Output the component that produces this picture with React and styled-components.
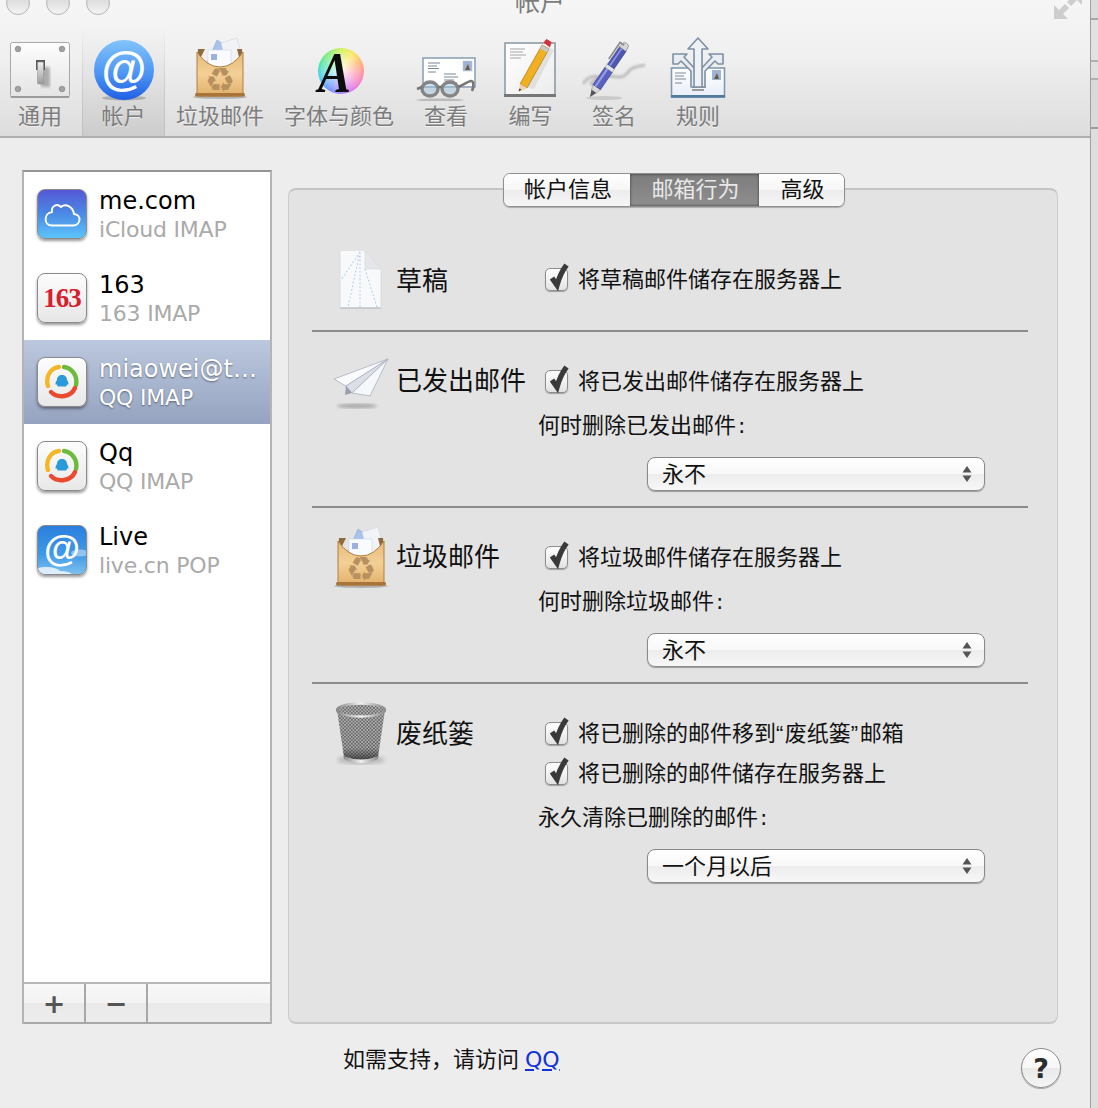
import React from 'react';
import styled, { createGlobalStyle } from 'styled-components';

const Global = createGlobalStyle`
  html, body { margin: 0; padding: 0; background: #dedede; }
  body { font-family: "DejaVu Sans", "Noto Sans CJK SC", sans-serif; }
`;

const Page = styled.div`
  width: 1098px;
  height: 1108px;
  display: flex;
  overflow: hidden;
`;
const Window = styled.div`
  width: 1090px;
  display: flex;
  flex-direction: column;
  background: #ededed;
  border-right: 1px solid #a0a0a0;
  box-sizing: content-box;
`;
const RightStrip = styled.div`
  flex: 1;
  background: linear-gradient(
    #dcdcdc 0 18px, #a8a8a8 18px 20px, #e2e2e2 20px 60px, #b0b0b0 60px 62px,
    #e0e0e0 62px 78px, #b0b0b0 78px 80px, #dadada 80px 127px, #9c9c9c 127px 129px, #dedede 129px
  );
`;

/* toolbar */
const Toolbar = styled.header`
  height: 136px;
  flex: none;
  background: linear-gradient(#f6f6f6, #f0f0f0 40%, #dddddd);
  border-bottom: 2px solid #aeaeae;
`;
const TitleBar = styled.div`
  height: 27px;
  display: grid;
  grid-template-columns: 515px 50px 1fr;
`;
const Lights = styled.div`
  display: flex;
  gap: 16px;
  margin: -9px 0 0 6px;
`;
const Light = styled.span`
  width: 24px;
  height: 24px;
  border-radius: 50%;
  box-sizing: border-box;
  border: 1px solid #b4b4b4;
  background: linear-gradient(#d0d0d0, #f4f4f4);
`;
const Title = styled.div`
  font-size: 25px;
  line-height: 25px;
  margin-top: -10px;
  color: #7d7d7d;
  white-space: nowrap;
`;
const ResizeIcon = styled.svg`
  justify-self: end;
  margin-right: 8px;
`;
const Tabs = styled.nav`
  display: flex;
  height: 109px;
`;
const Tab = styled.div`
  width: ${(p) => p.$w}px;
  flex: none;
  box-sizing: border-box;
  padding: 10px ${(p) => p.$right || 0}px 0 0;
  display: flex;
  flex-direction: column;
  align-items: center;
  ${(p) => p.$active && `
    background: linear-gradient(rgba(0,0,0,0), rgba(0,0,0,.075));
    border-left: 1px solid;
    border-right: 1px solid;
    border-image: linear-gradient(rgba(170,170,170,0), #bdbdbd) 1;
  `}
`;
const TabIcon = styled.div`
  height: 64px;
  display: flex;
  justify-content: center;
`;
const TabLabel = styled.div`
  font-size: 22px;
  line-height: 32px;
  color: #7c7c7c;
  text-shadow: 0 1px 0 rgba(255, 255, 255, .6);
  white-space: nowrap;
`;
const WheelBox = styled.div`
  width: 60px;
  height: 64px;
  position: relative;
`;
const Wheel = styled.div`
  position: absolute;
  left: 9px;
  top: 11px;
  width: 46px;
  height: 46px;
  border-radius: 50%;
  background:
    radial-gradient(circle, rgba(255,255,255,.95), rgba(255,255,255,.3) 60%, rgba(255,255,255,0) 78%),
    conic-gradient(#c8f040, #ffe040, #ff9a60, #ff70a0, #e060e0, #9070ff, #5080ff, #30c0f0, #30e0a0, #70e860, #c8f040);
`;
const WheelLetter = styled.span`
  position: absolute;
  left: 9px;
  top: 4px;
  font: italic bold 58px/64px "Liberation Serif", serif;
  color: #0c0c0c;
  transform: scaleX(.85);
  transform-origin: left center;
`;

/* main area */
const Content = styled.main`
  height: 854px;
  flex: none;
  margin-top: 32px;
  padding: 0 32px 0 22px;
  display: flex;
  gap: 16px;
`;
const Sidebar = styled.aside`
  width: 250px;
  flex: none;
  box-sizing: border-box;
  display: flex;
  flex-direction: column;
  background: #fff;
  border: 2px solid #b4b4b4;
  border-top-color: #949494;
  border-bottom: 0;
`;
const AccountList = styled.ul`
  list-style: none;
  margin: 0;
  padding: 0;
  flex: 1;
`;
const Account = styled.li`
  height: 84px;
  box-sizing: border-box;
  padding: 17px 0 0 13px;
  display: flex;
  gap: 12px;
  background: ${(p) => (p.$active ? 'linear-gradient(#bcc8de, #95a3c0)' : 'transparent')};
`;
const AppIcon = styled.div`
  width: 50px;
  height: 50px;
  flex: none;
  box-sizing: border-box;
  border-radius: 8px;
  border: 1px solid #8a8a8a;
  box-shadow: 0 2px 3px rgba(0, 0, 0, .4);
  background: ${(p) => p.$bg};
  display: flex;
  align-items: center;
  justify-content: center;
  overflow: hidden;
`;
const Badge163 = styled.span`
  font: bold 27px/1 "Liberation Serif", serif;
  color: #d8202c;
  letter-spacing: -1px;
`;
const AccountText = styled.div`
  min-width: 0;
  flex: 1;
  margin-top: -3px;
`;
const AccountName = styled.div`
  font-size: 24px;
  line-height: 30px;
  color: ${(p) => (p.$active ? '#fff' : '#000')};
  text-shadow: ${(p) => (p.$active ? '0 1px 2px rgba(0,0,0,.45)' : 'none')};
  white-space: nowrap;
`;
const AccountType = styled.div`
  font-size: 22px;
  line-height: 28px;
  letter-spacing: -.2px;
  color: ${(p) => (p.$active ? '#fff' : '#aaa')};
  text-shadow: ${(p) => (p.$active ? '0 1px 2px rgba(0,0,0,.45)' : 'none')};
`;
const ListBar = styled.div`
  height: 42px;
  flex: none;
  box-sizing: border-box;
  display: flex;
  border-top: 2px solid #b8b8b8;
  border-bottom: 2px solid #a8a8a8;
  background: linear-gradient(#f8f8f8, #f3f3f3 50%, #eaeaea 50%, #ececec);
`;
const BarButton = styled.div`
  width: 62px;
  box-sizing: border-box;
  border-right: 2px solid #a8a8a8;
  display: flex;
  align-items: center;
  justify-content: center;
  font: bold 27px/1 "DejaVu Sans", sans-serif;
  color: #555;
`;

const Panel = styled.section`
  flex: 1;
  margin-top: 18px;
  position: relative;
  box-sizing: border-box;
  background: #e3e3e3;
  border: 1px solid #cdcdcd;
  border-top: 2px solid #c4c4c4;
  border-bottom: 2px solid #c8c8c8;
  border-radius: 8px;
  padding: 40px 29px 0 23px;
`;
const Segments = styled.div`
  position: absolute;
  top: -17px;
  left: 214px;
  display: flex;
  height: 34px;
  box-sizing: border-box;
  border: 1px solid #8f8f8f;
  border-radius: 7px;
  overflow: hidden;
  box-shadow: 0 1px 1px rgba(0, 0, 0, .25);
`;
const Segment = styled.div`
  width: ${(p) => p.$w}px;
  box-sizing: border-box;
  padding-left: 2px;
  text-align: center;
  font-size: 22px;
  line-height: 32px;
  color: ${(p) => (p.$active ? '#e8e8e8' : '#111')};
  background: ${(p) => (p.$active
    ? 'linear-gradient(#7d7d7d, #8e8e8e)'
    : 'linear-gradient(#fff, #f6f6f6 50%, #ececec 50%, #f6f6f6)')};
  box-shadow: ${(p) => (p.$active ? 'inset 0 0 3px rgba(0,0,0,.6)' : 'none')};
`;
const Group = styled.div`
  display: grid;
  grid-template-columns: 84px 142px 1fr;
  padding: 32px 0 ${(p) => p.$bottom}px;
  & + & { border-top: 2px solid #8c8c8c; }
`;
const GroupIcon = styled.div`
  display: flex;
  justify-content: center;
  padding-left: 13px;
  margin-top: ${(p) => p.$top}px;
  height: 0;
`;
const GroupLabel = styled.div`
  height: 30px;
  font-size: 26px;
  line-height: 34px;
  margin-top: ${(p) => p.$top || 0}px;
  color: #111;
  white-space: nowrap;
`;
const GroupBody = styled.div`
  display: flex;
  flex-direction: column;
`;
const CheckRow = styled.div`
  height: 34px;
  box-sizing: border-box;
  padding: 0 0 4px 7px;
  display: flex;
  align-items: center;
  gap: 10px;
  font-size: 22px;
  color: #111;
  white-space: nowrap;
  margin-top: ${(p) => p.$top || 0}px;
`;
const CheckBox = styled.span`
  position: relative;
  width: 23px;
  height: 23px;
  flex: none;
  box-sizing: border-box;
  margin-top: 4px;
  border: 1px solid #8e8e8e;
  border-radius: 5px;
  background: linear-gradient(#fff, #f2f2f2 50%, #e2e2e2);
  box-shadow: 0 1px 1px rgba(0, 0, 0, .3);
`;
const CheckMark = styled.svg`
  position: absolute;
  left: 2px;
  top: -7px;
`;
const Quote = styled.span`
  font-family: "Liberation Sans", sans-serif;
  letter-spacing: 1.5px;
`;
const FieldLabel = styled.div`
  height: 34px;
  line-height: 36px;
  margin-top: 10px;
  font-size: 22px;
  color: #111;
  white-space: nowrap;
`;
const Colon = styled.span`
  margin-left: 2px;
`;
const Select = styled.div`
  width: 338px;
  height: 34px;
  margin: 15px 0 0 109px;
  box-sizing: border-box;
  padding: 0 12px 4px 14px;
  display: flex;
  align-items: center;
  justify-content: space-between;
  font-size: 22px;
  color: #111;
  border: 1px solid #8a8a8a;
  border-radius: 8px;
  background: linear-gradient(#fff, #f8f8f8 50%, #ececec 50%, #f7f7f7);
  box-shadow: 0 1px 1px rgba(0, 0, 0, .3);
`;
const SelectArrows = styled.svg`
  margin-top: 4px;
`;

/* footer */
const Footer = styled.footer`
  flex: 1;
  display: flex;
  padding: 0 29px 0 343px;
`;
const Support = styled.div`
  font-size: 22px;
  line-height: 30px;
  margin-top: 21px;
  color: #111;
  white-space: nowrap;
`;
const SupportLink = styled.a`
  color: #1232d6;
  text-decoration: underline;
  margin-left: 6px;
`;
const HelpButton = styled.div`
  width: 40px;
  height: 40px;
  margin: 24px 0 0 auto;
  box-sizing: border-box;
  border-radius: 50%;
  border: 1px solid #8c8c8c;
  background: linear-gradient(#fff, #f6f6f6 50%, #e9e9e9 50%, #f5f5f5);
  box-shadow: 0 1px 1px rgba(0, 0, 0, .3);
  display: flex;
  align-items: center;
  justify-content: center;
  font: bold 27px/1 "DejaVu Sans", sans-serif;
  color: #2c2c2c;
`;

/* drawings */
const SwitchIcon = () => (
  <svg width="60" height="64" viewBox="0 0 60 64">
    <defs>
      <linearGradient id="plate" x1="0" y1="0" x2="0" y2="1">
        <stop offset="0" stopColor="#fdfdfd" />
        <stop offset="1" stopColor="#e4e4e4" />
      </linearGradient>
      <linearGradient id="lever" x1="0" y1="0" x2="0" y2="1">
        <stop offset="0" stopColor="#f2f2f2" />
        <stop offset="1" stopColor="#9a9a9a" />
      </linearGradient>
      <filter id="soft"><feGaussianBlur stdDeviation="1.6" /></filter>
    </defs>
    <rect x="0.5" y="5.5" width="59" height="55" rx="2" fill="url(#plate)" stroke="#a8a8a8" />
    <rect x="1" y="59" width="58" height="2" fill="#9b9b9b" />
    {[[8, 12], [52, 12], [8, 52], [52, 52]].map(([x, y]) => (
      <circle key={x + '-' + y} cx={x} cy={y} r="2.8" fill="#a2a2a2" stroke="#777" strokeWidth=".6" />
    ))}
    <rect x="31" y="30" width="9" height="20" fill="#777" opacity=".55" filter="url(#soft)" />
    <rect x="26" y="23" width="9" height="10" fill="#5a5a5a" />
    <rect x="27.5" y="25" width="6" height="22" rx="1" fill="url(#lever)" stroke="#888" strokeWidth=".5" />
  </svg>
);

const AtIcon = () => (
  <svg width="60" height="64" viewBox="0 0 60 64">
    <defs>
      <linearGradient id="atBall" x1="0" y1="0" x2="0" y2="1">
        <stop offset="0" stopColor="#82c4fb" />
        <stop offset=".55" stopColor="#4d96f4" />
        <stop offset="1" stopColor="#2060e6" />
      </linearGradient>
    </defs>
    <ellipse cx="30" cy="61" rx="22" ry="2.5" fill="#000" opacity=".2" />
    <circle cx="30" cy="33" r="30" fill="url(#atBall)" />
    <text x="30" y="48" textAnchor="middle" fontFamily="Liberation Sans" fontSize="46" fontWeight="700" fill="#fff">@</text>
  </svg>
);

const BagIcon = ({ w = 54, h = 64 }) => (
  <svg width={w} height={h} viewBox="0 0 54 64">
    <defs>
      <linearGradient id="bag" x1="0" y1="0" x2="0" y2="1">
        <stop offset="0" stopColor="#e6ba78" />
        <stop offset=".5" stopColor="#f3d096" />
        <stop offset="1" stopColor="#e2b06a" />
      </linearGradient>
    </defs>
    <ellipse cx="27" cy="60" rx="27" ry="2" fill="#000" opacity=".22" />
    <path d="M14 26 L24 3 L40 14 V30 Z" fill="#a9c2ea" stroke="#8aa6d8" strokeWidth=".6" />
    <path d="M28 6 L44 1 L50 24 L34 28 Z" fill="#f2f3f6" stroke="#cfd3dc" strokeWidth=".6" />
    <rect x="15" y="13" width="23" height="17" fill="#fafbfe" stroke="#cdd3e4" strokeWidth=".6" />
    <rect x="18" y="17" width="6" height="6" fill="#9cb1e0" />
    <path d="M5 12 Q4 18 8 20 L12 12 Z M49 12 Q50 18 46 20 L44 12 Z" fill="#8f6a3c" />
    <path d="M4 15 Q14 30 27 30 Q40 30 50 15 L50 56 Q50 59 47 59 H7 Q4 59 4 56 Z" fill="url(#bag)" stroke="#b07e3a" />
    <rect x="2" y="56" width="50" height="3.5" rx="1.5" fill="#a9743a" />
    <text x="27" y="55" textAnchor="middle" fontFamily="DejaVu Sans" fontSize="34" fill="#b89060">♻</text>
  </svg>
);

const ColorIcon = () => (
  <WheelBox>
    <Wheel />
    <WheelLetter>A</WheelLetter>
  </WheelBox>
);

const LetterLines = () => (
  <g stroke="#5a6b80" strokeWidth=".8">
    <path d="M5 5h12M5 8h9M5 10.5h11M5 14h8" />
    <path d="M21 16h12M21 19h14M21 22h10M21 25h13" />
  </g>
);

const GlassesIcon = () => (
  <svg width="64" height="64" viewBox="0 0 64 64">
    <g transform="translate(9 21)">
      <rect x="0" y="0" width="52" height="29" fill="#fff" stroke="#8ea4b8" strokeWidth="1.6" />
      <LetterLines />
      <rect x="40" y="3" width="9" height="10" fill="#9fb3d4" stroke="#c0c8d4" strokeWidth=".6" />
      <path d="M42 12l3-6 2 6z" fill="#6b5a40" />
    </g>
    <ellipse cx="26" cy="63" rx="24" ry="1.5" fill="#000" opacity=".18" />
    <g fill="rgba(150,190,220,.45)" stroke="#858585" strokeWidth="3.4">
      <ellipse cx="16" cy="52" rx="8" ry="7" />
      <ellipse cx="36" cy="52" rx="8" ry="7" />
    </g>
    <path d="M24 50h4M8 50l-5 2M44 50c6-2 10-6 13-6s3 6 1 10" fill="none" stroke="#777" strokeWidth="2.6" />
  </svg>
);

const PencilIcon = () => (
  <svg width="54" height="64" viewBox="0 0 54 64">
    <defs>
      <linearGradient id="sheet" x1="0" y1="0" x2="1" y2="1">
        <stop offset="0" stopColor="#fff" />
        <stop offset="1" stopColor="#ececec" />
      </linearGradient>
    </defs>
    <rect x="1" y="6" width="50" height="53" fill="url(#sheet)" stroke="#8b9ca6" strokeWidth="1.6" />
    <rect x="0" y="57" width="52" height="3" fill="#777" />
    <path d="M6 12h15M6 15h13M6 18h16M6 21h11" stroke="#9a9a9a" strokeWidth=".9" />
    <path d="M21 50L30 52 50 13 40 8Z" fill="#000" opacity=".08" />
    <path d="M16 47L38 8l7 4-22 39z" fill="#f0b020" stroke="#a87814" strokeWidth=".7" />
    <path d="M38 8l7 4-2 3.5-7-4z" fill="#c8c8c8" />
    <path d="M39.5 5.5l3-3.5 5 3-1.5 5.5z" fill="#d8303a" />
    <path d="M16 47l7 4-6 3.5-2.5-.5z" fill="#f0d4b0" />
    <path d="M15.5 51.5l2 1-3 2z" fill="#333" />
  </svg>
);

const PenIcon = () => (
  <svg width="64" height="64" viewBox="0 0 64 64">
    <defs><filter id="penBlur"><feGaussianBlur stdDeviation=".8" /></filter></defs>
    <path d="M1 47c5-8 14-10 16-5s-6 8-8 4c6-6 18-8 26-6 8 1 10-4 14-8 3-2 8-3 14-4" fill="none" stroke="#aaa" strokeWidth="3" opacity=".7" filter="url(#penBlur)" />
    <ellipse cx="22" cy="61" rx="18" ry="2" fill="#000" opacity=".12" />
    <g transform="translate(8 60) rotate(34.4)">
      <path d="M0 0L3 -7H-3Z" fill="#555" />
      <path d="M-3 -7H3L4.5 -12H-4.5Z" fill="#d8d8dc" stroke="#777" strokeWidth=".4" />
      <rect x="-4.5" y="-33" width="9" height="21" fill="#5a62c0" stroke="#3c4290" strokeWidth=".6" />
      <rect x="-2.5" y="-33" width="2" height="21" fill="#9aa0e4" />
      <rect x="-4.5" y="-37" width="9" height="4" fill="#e4e4e8" stroke="#888" strokeWidth=".4" />
      <rect x="-4" y="-58" width="8" height="21" fill="#4e56b0" stroke="#3c4290" strokeWidth=".6" />
      <rect x="-2.2" y="-58" width="1.8" height="21" fill="#8c92da" />
      <path d="M-4 -58H4L3 -64Q0 -66 -3 -64Z" fill="#d8d8de" stroke="#666" strokeWidth=".5" />
      <path d="M-1 -62H-6V-42" fill="none" stroke="#8a8a8a" strokeWidth="1.6" />
    </g>
  </svg>
);

const RulesIcon = () => (
  <svg width="56" height="64" viewBox="0 0 56 64">
    <defs>
      <linearGradient id="ruleMail" x1="0" y1="0" x2="0" y2="1">
        <stop offset="0" stopColor="#fff" />
        <stop offset="1" stopColor="#e8eef8" />
      </linearGradient>
    </defs>
    <rect x="1.5" y="31" width="53" height="29" fill="url(#ruleMail)" stroke="#7f9ab2" strokeWidth="1.6" />
    <rect x="1" y="58" width="54" height="2.6" fill="#4f7ba0" />
    <path d="M5 36h11M5 39h9M5 42h11M5 46h7" stroke="#5a6b80" strokeWidth=".8" />
    <path d="M22 50h14M22 53h12" stroke="#444" strokeWidth="1" />
    <rect x="42" y="33" width="9" height="10" fill="#9fb3d4" />
    <path d="M44 42l3-6 2 6z" fill="#6b5a40" />
    <g fill="#eef1f5" stroke="#7d90a4" strokeWidth="1.6" strokeLinejoin="round">
      <path d="M3 17 H17 L14 20 L25 32 V50 H21 V34 L11 24 L8 27 H3 Z" fill="#e9edf2" />
      <path d="M53 17 H39 L42 20 L31 32 V50 H35 V34 L45 24 L48 27 H53 Z" fill="#e9edf2" />
      <path d="M28 1 L38 12 H32 V50 H24 V12 H18 Z" />
    </g>
  </svg>
);

const CloudIcon = () => (
  <svg width="38" height="26" viewBox="0 0 38 26">
    <path d="M9 24.5h21c8 0 9-11 1-11.5C30 6 23 2 18 6 14 2 8 5 9 11 .5 12 .5 24.5 9 24.5z" fill="none" stroke="#fff" strokeWidth="1.9" />
  </svg>
);

const QqIcon = () => (
  <svg width="36" height="36" viewBox="0 0 36 36">
    <path d="M20 3C28 4 34 12 32 21" fill="none" stroke="#6cbb3c" strokeWidth="4.4" strokeLinecap="round" />
    <path d="M31 24C27 33 14 35 7 28" fill="none" stroke="#ea4b30" strokeWidth="4.4" strokeLinecap="round" />
    <path d="M4 22C1 12 7 4 15 3" fill="none" stroke="#f5b72a" strokeWidth="4.4" strokeLinecap="round" />
    <path d="M18 11c3 0 5 2 5 5 1.500 2 2 4 1 5l-1-1c0 1.500-.5 2-1 2.500h-8c-.5-.5-1-1-1-2.500l-1 1c-1-1-.5-3 1-5 0-3 2-5 5-5z" fill="#2a9ad8" />
  </svg>
);

const LiveIcon = () => (
  <svg width="48" height="48" viewBox="0 0 48 48">
    <g fill="#fff" opacity=".75">
      <ellipse cx="8" cy="46" rx="14" ry="5" />
      <ellipse cx="22" cy="49" rx="12" ry="4" />
    </g>
    <ellipse cx="42" cy="27" rx="9" ry="3.5" fill="#8fc5ef" />
    <text x="24" y="35" textAnchor="middle" fontFamily="Liberation Sans" fontSize="37" fontWeight="700" fill="#fff">@</text>
  </svg>
);

const DraftIcon = () => (
  <svg width="44" height="60" viewBox="0 0 44 60">
    <path d="M1 1H26L42 19V58H1Z" fill="#f8f9fb" />
    <path d="M26 1L42 19H26Z" fill="#e4e6ea" stroke="#d4d6da" strokeWidth=".6" />
    <path d="M21 2L2 30M21 2L9 57M21 2V57M26 19L38 57" stroke="#bcd0ee" strokeWidth="1.2" strokeDasharray="1.8 2" fill="none" />
    <path d="M1 58H42" stroke="#c0c0c0" strokeWidth="1.4" />
    <path d="M1 1V58M42 19V58" stroke="#d8d8d8" strokeWidth=".8" />
  </svg>
);

const PlaneIcon = () => (
  <svg width="58" height="54" viewBox="0 0 58 54">
    <defs><filter id="planeBlur"><feGaussianBlur stdDeviation="1.4" /></filter></defs>
    <ellipse cx="25" cy="48" rx="20" ry="2.5" fill="#777" opacity=".5" filter="url(#planeBlur)" />
    <path d="M2 21L56 1L14 28Z" fill="#fbfbfd" stroke="#aab0c0" strokeWidth=".8" />
    <path d="M56 1L14 28L20 35Z" fill="#dcdfe8" stroke="#aab0c0" strokeWidth=".8" />
    <path d="M56 1L20 35L38 38Z" fill="#f6f7fa" stroke="#aab0c0" strokeWidth=".8" />
    <path d="M14 28L20 35L13 37Z" fill="#9aa0ae" />
  </svg>
);

const TrashIcon = () => (
  <svg width="54" height="64" viewBox="0 0 54 64">
    <defs>
      <pattern id="mesh" width="3.4" height="3.4" patternUnits="userSpaceOnUse">
        <rect width="3.4" height="3.4" fill="#b4b4b4" />
        <circle cx=".85" cy=".85" r=".75" fill="#444" />
        <circle cx="2.55" cy="2.55" r=".75" fill="#444" />
      </pattern>
      <linearGradient id="rim" x1="0" y1="0" x2="1" y2="0">
        <stop offset="0" stopColor="#8a8a8a" />
        <stop offset=".5" stopColor="#f0f0f0" />
        <stop offset="1" stopColor="#8a8a8a" />
      </linearGradient>
      <linearGradient id="depth" x1="0" y1="0" x2="0" y2="1">
        <stop offset="0" stopColor="#000" stopOpacity="0" />
        <stop offset=".75" stopColor="#000" stopOpacity=".05" />
        <stop offset="1" stopColor="#000" stopOpacity=".55" />
      </linearGradient>
      <filter id="trashBlur"><feGaussianBlur stdDeviation="2" /></filter>
    </defs>
    <ellipse cx="27" cy="58" rx="24" ry="4" fill="#000" opacity=".2" filter="url(#trashBlur)" />
    <path d="M3 8L10 55Q27 62 44 55L51 8Z" fill="url(#mesh)" />
    <path d="M3 8L10 55Q27 62 44 55L51 8Z" fill="url(#depth)" />
    <ellipse cx="27" cy="8" rx="24" ry="6.5" fill="url(#mesh)" stroke="url(#rim)" strokeWidth="2.4" />
    <path d="M9.500 54Q27 61 44.500 54L44 57Q27 65 10 57Z" fill="url(#rim)" />
  </svg>
);

const Check = ({ children, top }) => (
  <CheckRow $top={top}>
    <CheckBox>
      <CheckMark width="22" height="30" viewBox="0 0 22 30">
        <path d="M4 16l5 7C11 16 14 9 18.500 3" fill="none" stroke="#3a3a3a" strokeWidth="5.4" />
      </CheckMark>
    </CheckBox>
    <span>{children}</span>
  </CheckRow>
);

const Popup = ({ value }) => (
  <Select>
    {value}
    <SelectArrows width="10" height="16" viewBox="0 0 10 16">
      <path d="M5 0l4.500 6.500h-9zM5 16L.5 9.500h9z" fill="#555" />
    </SelectArrows>
  </Select>
);

const toolbarTabs = [
  { label: '通用', w: 82, right: 2, icon: <SwitchIcon /> },
  { label: '帐户', w: 83, icon: <AtIcon />, active: true },
  { label: '垃圾邮件', w: 110, icon: <BagIcon /> },
  { label: '字体与颜色', w: 128, icon: <ColorIcon /> },
  { label: '查看', w: 86, icon: <GlassesIcon /> },
  { label: '编写', w: 83, icon: <PencilIcon /> },
  { label: '签名', w: 84, icon: <PenIcon /> },
  { label: '规则', w: 84, icon: <RulesIcon /> },
];

const accounts = [
  { name: 'me.com', type: 'iCloud IMAP', bg: 'linear-gradient(#5558d6, #4a8ae4 50%, #5cc4fc)', icon: <CloudIcon /> },
  { name: '163', type: '163 IMAP', bg: 'linear-gradient(#fdfdfd, #e6e6e6)', icon: <Badge163>163</Badge163> },
  { name: 'miaowei@t…', type: 'QQ IMAP', bg: 'linear-gradient(#fdfdfd, #e8e8e8)', icon: <QqIcon />, active: true },
  { name: 'Qq', type: 'QQ IMAP', bg: 'linear-gradient(#fdfdfd, #e8e8e8)', icon: <QqIcon /> },
  { name: 'Live', type: 'live.cn POP', bg: 'linear-gradient(#2a7fdc, #3f9ae8 60%, #7cc0ee)', icon: <LiveIcon /> },
];

const App = () => (
  <Page>
    <Global />
    <Window>
      <Toolbar>
        <TitleBar>
          <Lights>
            <Light />
            <Light />
            <Light />
          </Lights>
          <Title>帐户</Title>
          <ResizeIcon width="30" height="20" viewBox="0 0 30 20">
            <path d="M2 5V19H16L11 14L17 8L13 4L7 10ZM30 5V-9H16L21 -4L15 2L19 6L25 0Z" fill="#cdcdcd" />
          </ResizeIcon>
        </TitleBar>
        <Tabs>
          {toolbarTabs.map((t) => (
            <Tab key={t.label} $w={t.w} $right={t.right} $active={t.active}>
              <TabIcon>{t.icon}</TabIcon>
              <TabLabel>{t.label}</TabLabel>
            </Tab>
          ))}
        </Tabs>
      </Toolbar>

      <Content>
        <Sidebar>
          <AccountList>
            {accounts.map((a) => (
              <Account key={a.name} $active={a.active}>
                <AppIcon $bg={a.bg}>{a.icon}</AppIcon>
                <AccountText>
                  <AccountName $active={a.active}>{a.name}</AccountName>
                  <AccountType $active={a.active}>{a.type}</AccountType>
                </AccountText>
              </Account>
            ))}
          </AccountList>
          <ListBar>
            <BarButton>+</BarButton>
            <BarButton>−</BarButton>
          </ListBar>
        </Sidebar>

        <Panel>
          <Segments>
            <Segment $w={126}>帐户信息</Segment>
            <Segment $w={129} $active>邮箱行为</Segment>
            <Segment $w={85}>高级</Segment>
          </Segments>

          <Group $bottom={34}>
            <GroupIcon $top={-12}><DraftIcon /></GroupIcon>
            <GroupLabel $top={2}>草稿</GroupLabel>
            <GroupBody>
              <Check>将草稿邮件储存在服务器上</Check>
            </GroupBody>
          </Group>

          <Group $bottom={15}>
            <GroupIcon $top={-6}><PlaneIcon /></GroupIcon>
            <GroupLabel>已发出邮件</GroupLabel>
            <GroupBody>
              <Check>将已发出邮件储存在服务器上</Check>
              <FieldLabel>何时删除已发出邮件<Colon>:</Colon></FieldLabel>
              <Popup value="永不" />
            </GroupBody>
          </Group>

          <Group $bottom={15}>
            <GroupIcon $top={-14}><BagIcon /></GroupIcon>
            <GroupLabel>垃圾邮件</GroupLabel>
            <GroupBody>
              <Check>将垃圾邮件储存在服务器上</Check>
              <FieldLabel>何时删除垃圾邮件<Colon>:</Colon></FieldLabel>
              <Popup value="永不" />
            </GroupBody>
          </Group>

          <Group $bottom={15}>
            <GroupIcon $top={-14}><TrashIcon /></GroupIcon>
            <GroupLabel $top={1}>废纸篓</GroupLabel>
            <GroupBody>
              <Check>将已删除的邮件移到<Quote>“</Quote>废纸篓<Quote>”</Quote>邮箱</Check>
              <Check top={6}>将已删除的邮件储存在服务器上</Check>
              <FieldLabel>永久清除已删除的邮件<Colon>:</Colon></FieldLabel>
              <Popup value="一个月以后" />
            </GroupBody>
          </Group>
        </Panel>
      </Content>

      <Footer>
        <Support>
          如需支持，请访问
          <SupportLink href="#">QQ</SupportLink>
        </Support>
        <HelpButton>?</HelpButton>
      </Footer>
    </Window>
    <RightStrip />
  </Page>
);

export default App;
